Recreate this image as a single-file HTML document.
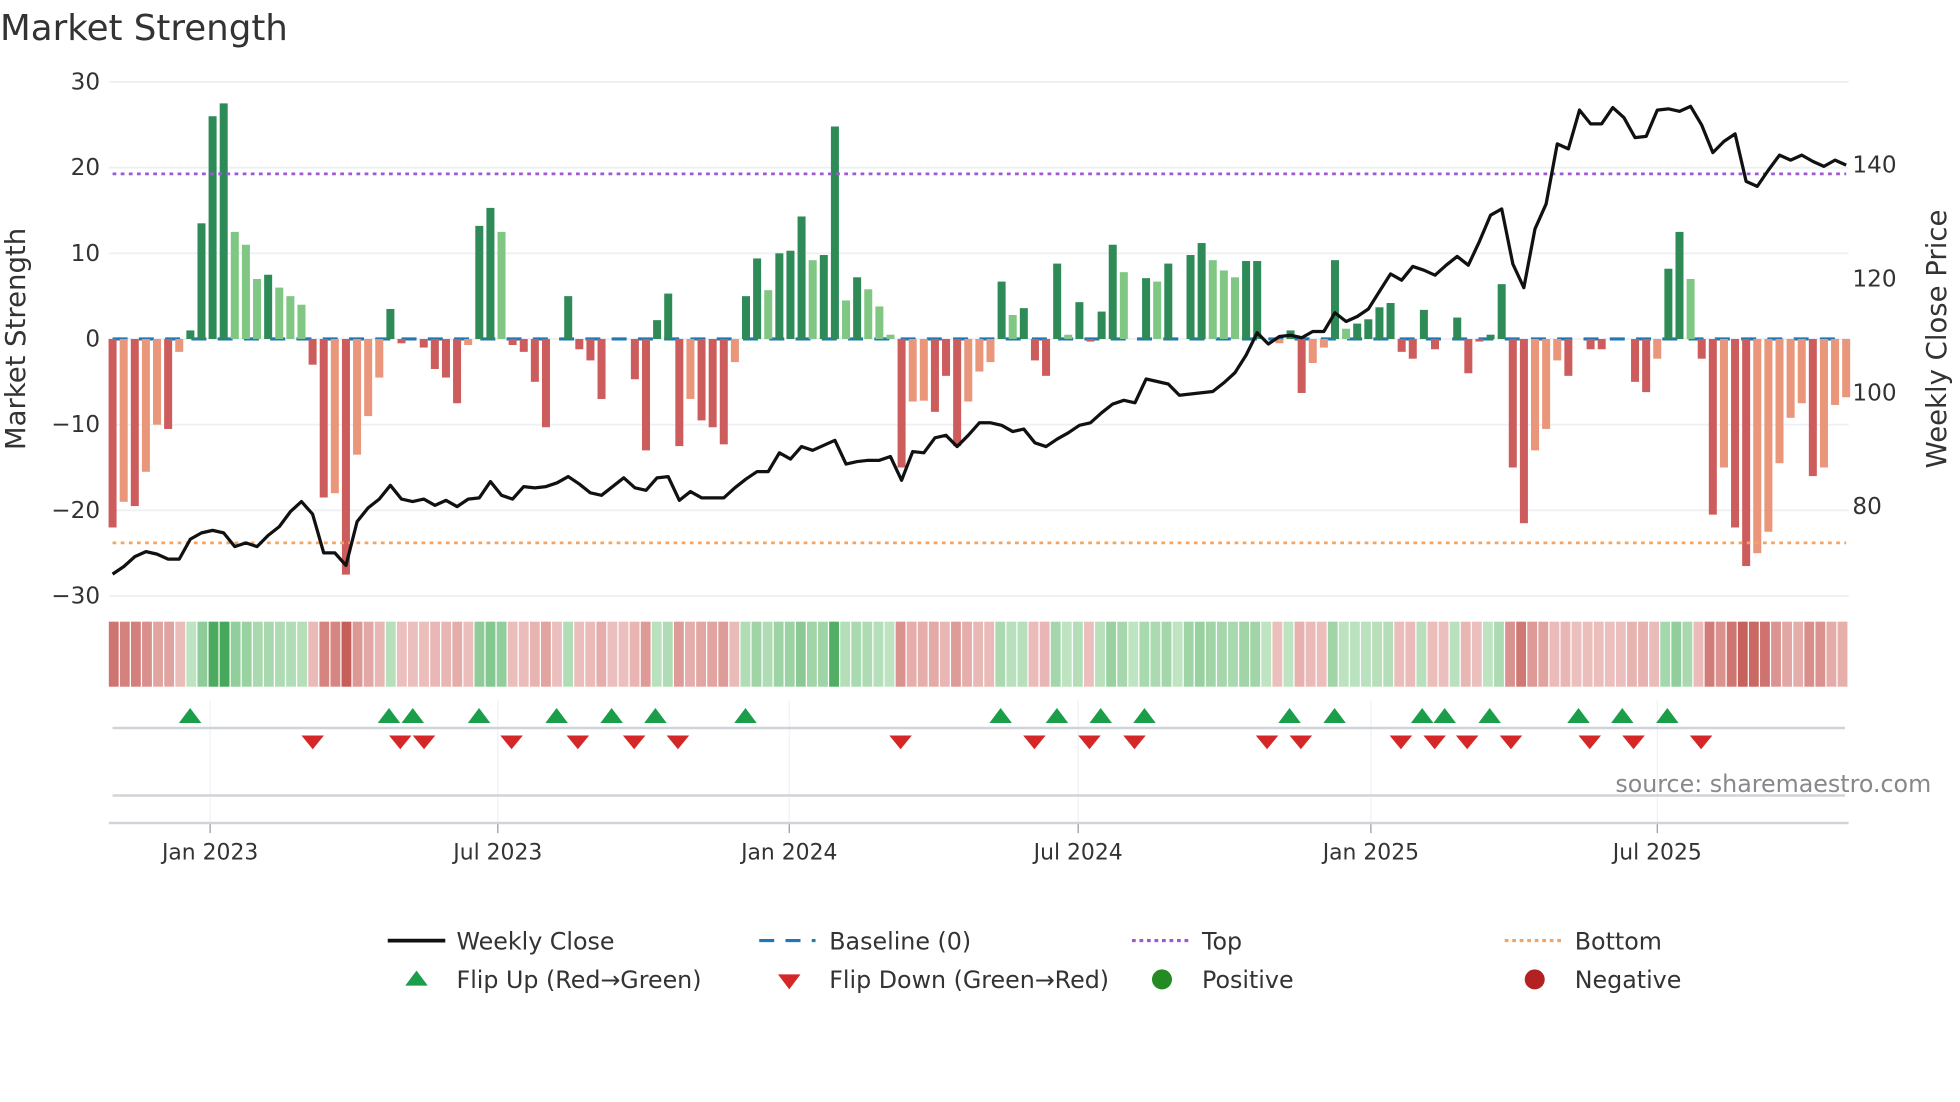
<!DOCTYPE html>
<html><head><meta charset="utf-8"><style>
html,body{margin:0;padding:0;background:#fff;}
svg{display:block;font-family:"DejaVu Sans","Liberation Sans",sans-serif;}
</style></head><body>
<svg id="c" width="1960" height="1102" viewBox="0 0 1567 881" xmlns="http://www.w3.org/2000/svg">
<rect width="1567" height="881" fill="#fff"/>
<text x="0" y="32" font-size="28.5" fill="#333">Market Strength</text>
<g id="grid"></g>
<g id="bars"></g>
<g id="heat"></g>
<g id="marks"></g>
<g id="txt" font-size="17.5" fill="#333"></g>
<text x="20" y="271" font-size="22" fill="#333" text-anchor="middle" transform="rotate(-90 20 271)">Market Strength</text>
<text x="1556" y="271" font-size="22" fill="#333" text-anchor="middle" transform="rotate(-90 1556 271)">Weekly Close Price</text>
<text x="1544" y="633" font-size="19" fill="#888" text-anchor="end">source: sharemaestro.com</text>
<g font-size="19" fill="#333">
<line x1="310" y1="752" x2="356" y2="752" stroke="#111" stroke-width="3"/>
<text x="365" y="759">Weekly Close</text>
<line x1="607" y1="752" x2="652" y2="752" stroke="#1f77b4" stroke-width="2.5" stroke-dasharray="12,9"/>
<text x="663" y="759">Baseline (0)</text>
<line x1="905" y1="752" x2="950" y2="752" stroke="#9b59d6" stroke-width="2.5" stroke-dasharray="3,3"/>
<text x="961" y="759">Top</text>
<line x1="1203" y1="752" x2="1248" y2="752" stroke="#f4a460" stroke-width="2.5" stroke-dasharray="3,3"/>
<text x="1259" y="759">Bottom</text>
<polygon points="324,788 342,788 333,776" fill="#1a9e4a"/>
<text x="365" y="790">Flip Up (Red→Green)</text>
<polygon points="622,779 640,779 631,791" fill="#d62728"/>
<text x="663" y="790">Flip Down (Green→Red)</text>
<circle cx="929" cy="783" r="8" fill="#228b22"/>
<text x="961" y="790">Positive</text>
<circle cx="1227" cy="783" r="8" fill="#b22222"/>
<text x="1259" y="790">Negative</text>
</g>
</svg>
<script>
var NS="http://www.w3.org/2000/svg";
function el(p,t,a,tx){var e=document.createElementNS(NS,t);for(var k in a)e.setAttribute(k,a[k]);if(tx!==undefined)e.textContent=tx;document.getElementById(p).appendChild(e);return e;}
var v=[-22,-19,-19.5,-15.5,-10,-10.5,-1.5,1,13.5,26,27.5,12.5,11,7,7.5,6,5,4,-3,-18.5,-18,-27.5,-13.5,-9,-4.5,3.5,-0.5,0,-1,-3.5,-4.5,-7.5,-0.7,13.2,15.3,12.5,-0.7,-1.5,-5,-10.3,0,5,-1.2,-2.5,-7,0,0,-4.7,-13,2.2,5.3,-12.5,-7,-9.5,-10.3,-12.3,-2.7,5,9.4,5.7,10,10.3,14.3,9.2,9.8,24.8,4.5,7.2,5.8,3.8,0.5,-15,-7.3,-7.2,-8.5,-4.3,-12.5,-7.3,-3.8,-2.7,6.7,2.8,3.6,-2.5,-4.3,8.8,0.5,4.3,-0.3,3.2,11,7.8,0,7.1,6.7,8.8,0,9.8,11.2,9.2,8,7.2,9.1,9.1,0,-0.5,1,-6.3,-2.8,-1,9.2,1.2,1.8,2.3,3.7,4.2,-1.5,-2.3,3.4,-1.2,0,2.5,-4,-0.3,0.5,6.4,-15,-21.5,-13,-10.5,-2.5,-4.3,0,-1.2,-1.2,0,0,-5,-6.2,-2.3,8.2,12.5,7,-2.3,-20.5,-15,-22,-26.5,-25,-22.5,-14.5,-9.2,-7.5,-16,-15,-7.7,-6.8];
var d=[1,0,1,0,0,1,0,1,1,1,1,0,0,0,1,0,0,0,1,1,0,1,0,0,0,1,1,1,1,1,1,1,0,1,1,0,1,1,1,1,1,1,1,1,1,1,1,1,1,1,1,1,0,1,1,1,0,1,1,0,1,1,1,0,1,1,0,1,0,0,0,1,0,0,1,1,1,0,0,0,1,0,1,1,1,1,0,1,1,1,1,0,1,1,0,1,1,1,1,0,0,0,1,1,1,0,1,1,0,0,1,0,1,1,1,1,1,1,1,1,1,1,1,1,1,1,1,1,0,0,0,1,1,1,1,1,1,1,1,0,1,1,0,1,1,0,1,1,0,0,0,0,0,1,0,0,0];
var py=[459,453,445,441,443,447,447,431,426,424,426,437,434,437,428,421,409,401,411,442,442,452,417,406,399,388,399,401,399,404,400,405,399,398,385,396,399,389,390,389,386,381,387,394,396,389,382,390,392,382,381,400,393,398,398,398,390,383,377,377,362,367,357,360,356,352,371,369,368,368,365,384,361,362,350,348,357,348,338,338,340,345,343,354,357,351,346,340,338,330,323,320,322,303,305,307,316,315,314,313,306,298,284,266,275,269,268,270,265,265,250,257,253,247,233,219,224,213,216,220,212,205,212,193,172,167,211,230,183,163,115,119,88,99,99,86,94,110,109,88,87,89,85,100,122,113,107,145,149,136,124,128,124,129,133,128,132];
var X0=90,ST=(1476-90)/156;
function Y(val){return 271-val*6.85;}
[30,20,10,0,-10,-20,-30].forEach(function(t){var y=Y(t);el("grid","line",{x1:87,x2:1478,y1:y,y2:y,stroke:"#eef0f4","stroke-width":1.5});el("txt","text",{x:80,y:y+6,"text-anchor":"end","font-size":18.5},(t<0?"\u2212"+(-t):""+t));});
[[140,131],[120,222],[100,313],[80,404]].forEach(function(p){el("txt","text",{x:1481,y:p[1]+7,"font-size":18.5},""+p[0]);});
var mt=[[168,"Jan 2023"],[398,"Jul 2023"],[631,"Jan 2024"],[862,"Jul 2024"],[1096,"Jan 2025"],[1325,"Jul 2025"]];
mt.forEach(function(m){el("grid","line",{x1:m[0],x2:m[0],y1:560,y2:658,stroke:"#eef2f4","stroke-width":1});el("grid","line",{x1:m[0],x2:m[0],y1:658,y2:666,stroke:"#999","stroke-width":1});el("txt","text",{x:m[0],y:687,"text-anchor":"middle"},m[1]);});
el("grid","line",{x1:90,x2:1475,y1:582,y2:582,stroke:"#d0d4d8","stroke-width":2});
el("grid","line",{x1:90,x2:1475,y1:636,y2:636,stroke:"#d0d4d8","stroke-width":2});
el("grid","line",{x1:87,x2:1478,y1:658,y2:658,stroke:"#d0d4d8","stroke-width":2});
el("bars","line",{x1:90,x2:1476,y1:271,y2:271,stroke:"#1f77b4","stroke-width":2.5,"stroke-dasharray":"12,9"});
v.forEach(function(val,i){var x=X0+i*ST-3.2;var col=val>=0?(d[i]?"#2e8b57":"#81c784"):(d[i]?"#cd5c5c":"#e9967a");if(Math.abs(val)<0.05)return;var y0=Y(Math.max(val,0)),h=Math.abs(val)*6.85;el("bars","rect",{x:x,y:y0,width:6.4,height:h,fill:col});});
el("bars","line",{x1:90,x2:1476,y1:139,y2:139,stroke:"#9b59d6","stroke-width":2.2,"stroke-dasharray":"3,3.5"});
el("bars","line",{x1:90,x2:1476,y1:434,y2:434,stroke:"#f4a460","stroke-width":2.2,"stroke-dasharray":"3,3.5"});
var pts=py.map(function(y,i){return (X0+i*ST).toFixed(1)+","+y;}).join(" ");
el("bars","polyline",{points:pts,fill:"none",stroke:"#111","stroke-width":2.6,"stroke-linejoin":"round"});
var prev=1;
v.forEach(function(val,i){var x=87+i*(1391/157);var s=val>0?1:(val<0?-1:prev);prev=s;var a=Math.min(Math.abs(val)/27,1);var t=0.15+0.85*Math.pow(a,1.3);var c;
if(s>0){c="rgb("+Math.round(212-(212-70)*t)+","+Math.round(238-(238-168)*t)+","+Math.round(212-(212-90)*t)+")";}
else{c="rgb("+Math.round(242-(242-198)*t)+","+Math.round(208-(208-95)*t)+","+Math.round(206-(206-90)*t)+")";}
el("heat","rect",{x:x,y:497,width:1391/157-1,height:52,fill:c});});
[152,311,330,383,445,489,524,596,800,845,880,915,1031,1067,1137,1155,1191,1262,1297,1333].forEach(function(x){el("marks","polygon",{points:(x-9)+",578 "+(x+9)+",578 "+x+",566",fill:"#1a9e4a"});});
[250,320,339,409,462,507,542,720,827,871,907,1013,1040,1120,1147,1173,1208,1271,1306,1360].forEach(function(x){el("marks","polygon",{points:(x-9)+",588 "+(x+9)+",588 "+x+",599",fill:"#d62728"});});
</script>
</body></html>
